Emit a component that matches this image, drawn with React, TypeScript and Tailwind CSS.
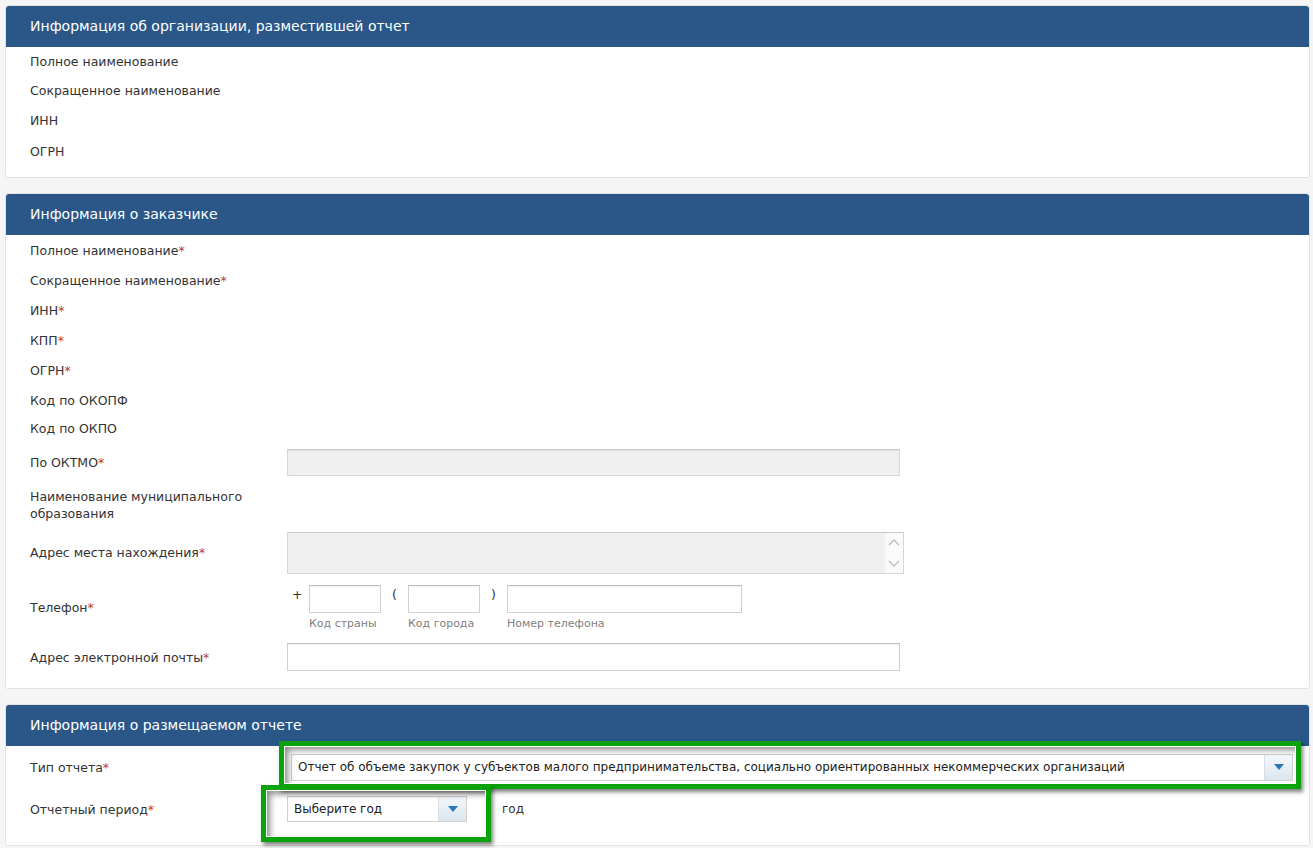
import type { ReactNode } from 'react';

const fontStack = '[font-family:"DejaVu_Sans",Verdana,sans-serif]';

function Req() {
  return <span className="text-[#c0392b]">*</span>;
}

function Card({ title, children }: { title: string; children: ReactNode }) {
  return (
    <section className="rounded-[3px] border border-[#e3e3e3] bg-white">
      <header className="flex h-[41px] items-center rounded-t-[3px] bg-[#2a5788] pl-6 text-[14px] text-white">
        {title}
      </header>
      {children}
    </section>
  );
}

function Row({
  label,
  required = false,
  className = 'h-[30px] items-center',
  labelClassName = '',
  children,
}: {
  label: ReactNode;
  required?: boolean;
  className?: string;
  labelClassName?: string;
  children?: ReactNode;
}) {
  return (
    <div className={`flex ${className}`}>
      <div className={`w-[257px] shrink-0 leading-[17px] ${labelClassName}`}>
        {label}
        {required ? <Req /> : null}
      </div>
      {children}
    </div>
  );
}

const disabledInput =
  'h-[27px] w-[613px] border border-[#d6d6d6] border-t-[#c8c8c8] bg-[#f0f0f0] shadow-[inset_0_1px_1px_rgba(0,0,0,0.06)]';
const textInput =
  'h-[28px] border border-[#d0d0d0] border-t-[#bdbdbd] bg-white shadow-[inset_0_1px_1px_rgba(0,0,0,0.05)]';

function DropArrow() {
  return (
    <span className="flex h-full w-[28px] shrink-0 items-center justify-center border-l border-[#d8dee6] bg-gradient-to-b from-[#f4f8fb] to-[#dbe6ef]">
      <svg width="10" height="6" viewBox="0 0 10 6">
        <path d="M0 0h10L5 6z" fill="#2b78b8" />
      </svg>
    </span>
  );
}

function Select({ text, className }: { text: string; className: string }) {
  return (
    <div
      className={`flex items-center border border-[#cfcfcf] bg-white text-[12px] text-[#222] ${className}`}
    >
      <span className="flex-1 truncate pl-[6px]">{text}</span>
      <DropArrow />
    </div>
  );
}

// annotation frame drawn over the select
function GreenFrame({ className }: { className: string }) {
  return (
    <span
      className={`pointer-events-none absolute border-[5px] border-[#0ba30b] shadow-[inset_0_0_0_1px_#fff,inset_4px_4px_6px_rgba(0,0,0,0.45),2px_3px_4px_rgba(0,0,0,0.5)] ${className}`}
    />
  );
}

function PhoneBox({ width, hint }: { width: string; hint: string }) {
  return (
    <div className="flex flex-col">
      <div className={`${textInput} ${width}`} />
      <span className="pt-[3px] text-[11px] text-[#808080]">{hint}</span>
    </div>
  );
}

export default function App() {
  return (
    <div
      className={`min-h-screen bg-[#f5f5f5] pb-[2px] pl-[5px] pr-[3px] pt-[5px] text-[12.5px] text-[#333] ${fontStack}`}
    >
      <div className="flex flex-col gap-[15px]">
        <Card title="Информация об организации, разместившей отчет">
          <div className="pb-[10px] pl-6">
            <Row label="Полное наименование" className="h-[29px] items-center" />
            <Row label="Сокращенное наименование" className="h-[29px] items-center" />
            <Row label="ИНН" className="h-[31px] items-center" />
            <Row label="ОГРН" className="h-[31px] items-center" />
          </div>
        </Card>

        <Card title="Информация о заказчике">
          <div className="pb-[16px] pl-6">
            <Row label="Полное наименование" required />
            <Row label="Сокращенное наименование" required />
            <Row label="ИНН" required />
            <Row label="КПП" required />
            <Row label="ОГРН" required />
            <Row label="Код по ОКОПФ" />
            <Row label="Код по ОКПО" className="h-[27px] items-center" />
            <Row label="По ОКТМО" required className="h-[40px] items-center">
              <div className={disabledInput} />
            </Row>
            <Row
              label={
                <>
                  Наименование муниципального
                  <br />
                  образования
                </>
              }
              className="h-[45px] items-center"
            />
            <Row label="Адрес места нахождения" required className="h-[51px] items-center">
              <div className="flex h-[42px] w-[617px] border border-[#d6d6d6] border-t-[#c8c8c8] bg-[#f0f0f0]">
                <div className="flex-1" />
                <div className="flex w-[18px] flex-col items-center justify-between bg-[#fafafa] py-[5px]">
                  <svg width="12" height="8" viewBox="0 0 12 8">
                    <path d="M1 7l5-5 5 5" fill="none" stroke="#bdbdbd" strokeWidth="1.4" />
                  </svg>
                  <svg width="12" height="8" viewBox="0 0 12 8">
                    <path d="M1 1l5 5 5-5" fill="none" stroke="#bdbdbd" strokeWidth="1.4" />
                  </svg>
                </div>
              </div>
            </Row>
            <Row
              label="Телефон"
              required
              className="h-[64px] items-start"
              labelClassName="pt-[21px]"
            >
              <div className="flex items-start pt-[7px]">
                <span className="w-[22px] pl-[5px] pt-[1px]">+</span>
                <PhoneBox width="w-[72px]" hint="Код страны" />
                <span className="w-[27px] pl-[11px] pt-[1px]">(</span>
                <PhoneBox width="w-[72px]" hint="Код города" />
                <span className="w-[27px] pl-[11px] pt-[1px]">)</span>
                <PhoneBox width="w-[235px]" hint="Номер телефона" />
              </div>
            </Row>
            <Row label="Адрес электронной почты" required className="h-[30px] items-center">
              <div className={`${textInput} w-[613px]`} />
            </Row>
          </div>
        </Card>

        <Card title="Информация о размещаемом отчете">
          <div className="pb-[15px] pl-6">
            <Row label="Тип отчета" required className="h-[42px] items-center">
              <div className="relative ml-[4px]">
                <Select
                  className="h-[27px] w-[1002px]"
                  text="Отчет об объеме закупок у субъектов малого предпринимательства, социально ориентированных некоммерческих организаций"
                />
                <GreenFrame className="-bottom-[8px] -left-[12px] -right-[8px] -top-[13px]" />
              </div>
            </Row>
            <Row label="Отчетный период" required className="h-[42px] items-center">
              <div className="relative">
                <Select className="h-[26px] w-[180px]" text="Выберите год" />
                <GreenFrame className="-bottom-[20px] -left-[26px] -right-[24px] -top-[11px]" />
              </div>
              <span className="pl-[35px] text-[12px]">год</span>
            </Row>
          </div>
        </Card>
      </div>
    </div>
  );
}
